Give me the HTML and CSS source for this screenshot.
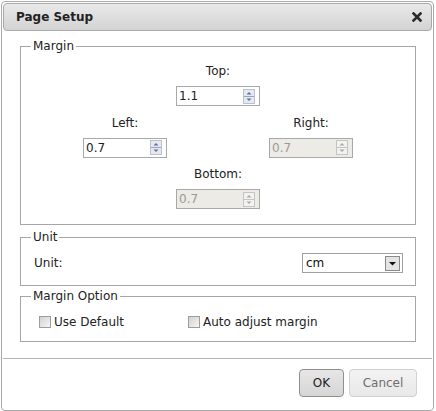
FILE: index.html
```html
<!DOCTYPE html>
<html>
<head>
<meta charset="utf-8">
<link rel="stylesheet" href="styles.css">
</head>
<body>
<div class="dialog">
  <div class="titlebar">
    <span class="title">Page Setup</span>
    <svg class="close" width="10" height="10" viewBox="0 0 10 10"><path d="M1.5 1.5 L8.5 8.5 M8.5 1.5 L1.5 8.5" stroke="#2b2b2b" stroke-width="2.6" stroke-linecap="square"/></svg>
  </div>
  <div class="content">
    <fieldset class="group group-margin">
      <legend>Margin</legend>
      <div class="margin-grid">
        <div class="cell cell-top">
          <div class="label">Top:</div>
          <div class="spin">
            <span class="val">1.1</span>
            <svg class="spin-btn" width="12" height="15" viewBox="0 0 12 15"><rect x="0.5" y="0.5" width="11" height="14" fill="#e6e9f0" stroke="#b9c0cf"/><line x1="1" y1="7.5" x2="11" y2="7.5" stroke="#9aa3b8"/><path d="M3.5 5.5 L6 3 L8.5 5.5 Z" fill="#5b70a4"/><path d="M3.5 9.5 L6 12 L8.5 9.5 Z" fill="#5b70a4"/></svg>
          </div>
        </div>
        <div class="cell cell-left">
          <div class="label">Left:</div>
          <div class="spin">
            <span class="val">0.7</span>
            <svg class="spin-btn" width="12" height="15" viewBox="0 0 12 15"><rect x="0.5" y="0.5" width="11" height="14" fill="#e6e9f0" stroke="#b9c0cf"/><line x1="1" y1="7.5" x2="11" y2="7.5" stroke="#9aa3b8"/><path d="M3.5 5.5 L6 3 L8.5 5.5 Z" fill="#5b70a4"/><path d="M3.5 9.5 L6 12 L8.5 9.5 Z" fill="#5b70a4"/></svg>
          </div>
        </div>
        <div class="cell cell-right">
          <div class="label">Right:</div>
          <div class="spin disabled">
            <span class="val">0.7</span>
            <svg class="spin-btn" width="12" height="15" viewBox="0 0 12 15"><rect x="0.5" y="0.5" width="11" height="14" fill="#f2f2ef" stroke="#c4c4c4"/><line x1="1" y1="7.5" x2="11" y2="7.5" stroke="#c4c4c4"/><path d="M3.5 5.5 L6 3 L8.5 5.5 Z" fill="#a8a8a8"/><path d="M3.5 9.5 L6 12 L8.5 9.5 Z" fill="#a8a8a8"/></svg>
          </div>
        </div>
        <div class="cell cell-bottom">
          <div class="label">Bottom:</div>
          <div class="spin disabled">
            <span class="val">0.7</span>
            <svg class="spin-btn" width="12" height="15" viewBox="0 0 12 15"><rect x="0.5" y="0.5" width="11" height="14" fill="#f2f2ef" stroke="#c4c4c4"/><line x1="1" y1="7.5" x2="11" y2="7.5" stroke="#c4c4c4"/><path d="M3.5 5.5 L6 3 L8.5 5.5 Z" fill="#a8a8a8"/><path d="M3.5 9.5 L6 12 L8.5 9.5 Z" fill="#a8a8a8"/></svg>
          </div>
        </div>
      </div>
    </fieldset>
    <fieldset class="group group-unit">
      <legend>Unit</legend>
      <div class="unit-row">
        <span class="unit-label">Unit:</span>
        <div class="select">
          <span class="val">cm</span>
          <svg class="select-btn" width="15" height="15" viewBox="0 0 15 15"><rect x="0.5" y="0.5" width="14" height="14" fill="#e4e4e4" stroke="#8a8a8a"/><path d="M4 6 L11 6 L7.5 9.5 Z" fill="#111"/></svg>
        </div>
      </div>
    </fieldset>
    <fieldset class="group group-option">
      <legend>Margin Option</legend>
      <div class="option-row">
        <label class="check check-first"><span class="box"></span>Use Default</label>
        <label class="check"><span class="box"></span>Auto adjust margin</label>
      </div>
    </fieldset>
  </div>
  <div class="footer">
    <button class="btn btn-ok">OK</button>
    <button class="btn btn-cancel">Cancel</button>
  </div>
</div>
</body>
</html>
```
FILE: styles.css
```css
html, body {
  margin: 0;
  padding: 0;
  background: #ffffff;
}
body {
  font-family: "DejaVu Sans", Verdana, sans-serif;
  font-size: 12px;
  color: #222;
}
.dialog {
  box-sizing: border-box;
  margin: 1px 0 0 1px;
  width: 433px;
  height: 410px;
  border: 1px solid #a9a9a9;
  border-radius: 4px;
  padding: 1px;
  background: #fff;
}
.titlebar {
  box-sizing: border-box;
  height: 28px;
  border: 1px solid #a9a9a9;
  border-radius: 4px;
  background: linear-gradient(#e9e9e9, #d3d3d3);
  display: flex;
  align-items: center;
  justify-content: space-between;
  padding: 0 9px 0 12px;
}
.title {
  font-weight: bold;
  font-size: 12px;
  color: #222;
}
.close {
  display: block;
}
.content {
  padding: 0 17px;
}
.group {
  box-sizing: border-box;
  width: 396px;
  margin: 0;
  padding: 0;
  border: 1px solid #a6a6a6;
  min-width: 0;
}
.group legend {
  margin-left: 10px;
  padding: 0 2px;
  line-height: 14px;
  font-size: 12px;
  color: #222;
}
.group-margin {
  margin-top: 8px;
  height: 186px;
}
.margin-grid {
  display: grid;
  grid-template-columns: 93px 93px 93px;
  justify-content: center;
  row-gap: 9.5px;
  padding-top: 11px;
}
.cell {
  display: flex;
  flex-direction: column;
  align-items: center;
}
.cell-top { grid-column: 2; grid-row: 1; }
.cell-left { grid-column: 1; grid-row: 2; }
.cell-right { grid-column: 3; grid-row: 2; }
.cell-bottom { grid-column: 2; grid-row: 3; }
.label {
  line-height: 14px;
  margin-bottom: 8px;
}
.spin {
  box-sizing: border-box;
  width: 84px;
  height: 20px;
  border: 1px solid #a8a8a8;
  background: #fff;
  display: flex;
  align-items: center;
  justify-content: space-between;
  padding: 0 4px 0 2px;
}
.spin.disabled {
  background: #ecebe5;
  color: #9a9a9a;
}
.spin-btn {
  display: block;
}
.group-unit {
  margin-top: 5px;
  height: 56px;
}
.unit-row {
  display: flex;
  align-items: center;
  justify-content: space-between;
  padding: 9px 12px 0 13px;
}
.select {
  box-sizing: border-box;
  width: 101px;
  height: 20px;
  border: 1px solid #a0a0a0;
  background: #fff;
  display: flex;
  align-items: center;
  justify-content: space-between;
  padding: 0 2px 0 3px;
}
.select .val {
  color: #111;
}
.select-btn {
  display: block;
}
.group-option {
  margin-top: 3px;
  height: 53px;
}
.option-row {
  display: flex;
  align-items: center;
  padding: 11px 0 0 18px;
  height: 16px;
}
.check {
  display: flex;
  align-items: center;
  gap: 3px;
}
.check-first {
  width: 149px;
}
.box {
  box-sizing: border-box;
  width: 12px;
  height: 12px;
  border: 1px solid #9c9c9c;
  background: linear-gradient(135deg, #d2d2d2, #f5f5f5);
  display: block;
}
.footer {
  margin-top: 16px;
  border-top: 1px solid #b4b4b4;
  display: flex;
  justify-content: flex-end;
  gap: 5px;
  padding: 10px 15px 0 0;
}
.btn {
  box-sizing: border-box;
  height: 28px;
  border-radius: 4px;
  font-family: "DejaVu Sans", Verdana, sans-serif;
  font-size: 12px;
  padding: 0;
  margin: 0;
}
.btn-ok {
  width: 45px;
  border: 1px solid #8f8f8f;
  background: linear-gradient(#e6e6e6, #d6d6d6);
  color: #222;
}
.btn-cancel {
  width: 68px;
  border: 1px solid #d0d0d0;
  background: linear-gradient(#f3f3f3, #e8e8e8);
  color: #6e6e6e;
}
```
